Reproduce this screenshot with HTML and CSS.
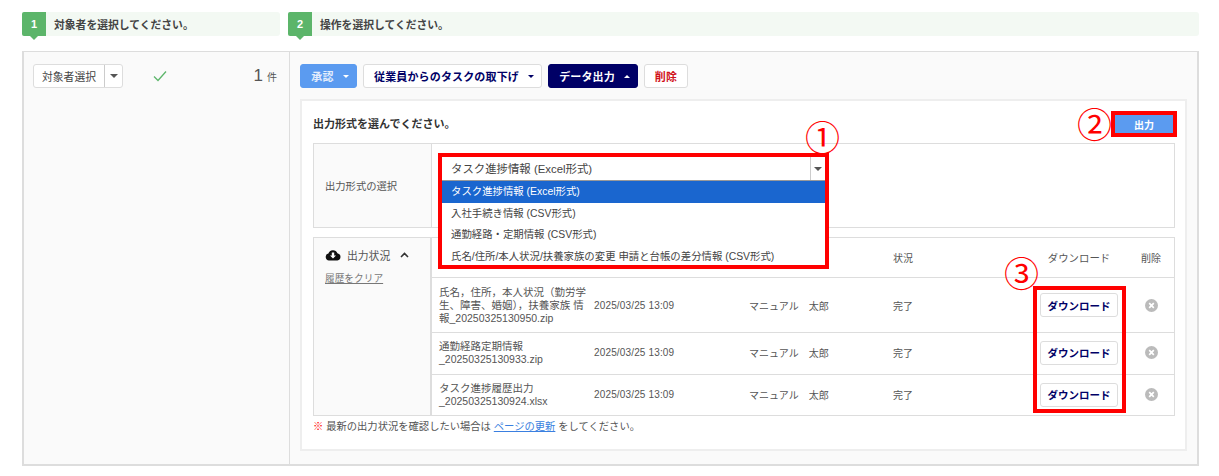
FILE: index.html
```html
<!DOCTYPE html>
<html lang="ja">
<head>
<meta charset="utf-8">
<title>データ出力</title>
<link rel="stylesheet" href="styles.css">
</head>
<body>
<div class="page">
  <div class="steps">
    <div class="step step-left"><span class="step-no">1</span><span class="step-text">対象者を選択してください。</span></div>
    <div class="step step-right"><span class="step-no">2</span><span class="step-text">操作を選択してください。</span></div>
  </div>
  <div class="panel">
    <aside class="side">
      <div class="split">
        <span class="split-label">対象者選択</span>
        <span class="split-arrow"><i class="caret caret-dark"></i></span>
      </div>
      <svg class="check" width="14" height="12" viewBox="0 0 14 12"><path d="M1 6.5 L5 10.5 L13 1.5" fill="none" stroke="#5cb56a" stroke-width="1.3"/></svg>
      <div class="count"><span class="count-num">1</span><span class="count-unit">件</span></div>
    </aside>
    <main class="work">
      <div class="actions">
        <button class="btn btn-blue">承認<i class="caret caret-white"></i></button>
        <button class="btn btn-white">従業員からのタスクの取下げ<i class="caret caret-navy"></i></button>
        <button class="btn btn-navy">データ出力<i class="caret caret-white caret-up"></i></button>
        <button class="btn btn-danger">削除</button>
      </div>
      <section class="card">
        <div class="card-head">
          <h2 class="card-title">出力形式を選んでください。</h2>
          <span class="mark mark-two">②</span>
          <button class="export">出力</button>
        </div>
        <div class="format">
          <div class="format-label">出力形式の選択</div>
          <div class="format-value">
            <span class="mark mark-one">①</span>
            <div class="combo">
              <div class="combo-head">
                <span class="combo-current">タスク進捗情報 (Excel形式)</span>
                <span class="combo-arrow"><i class="caret caret-dark"></i></span>
              </div>
              <ul class="combo-list">
                <li class="combo-item combo-active">タスク進捗情報 (Excel形式)</li>
                <li class="combo-item">入社手続き情報 (CSV形式)</li>
                <li class="combo-item">通勤経路・定期情報 (CSV形式)</li>
                <li class="combo-item">氏名/住所/本人状況/扶養家族の変更 申請と台帳の差分情報 (CSV形式)</li>
              </ul>
            </div>
          </div>
        </div>
        <div class="status">
          <div class="status-side">
            <div class="status-title">
              <svg class="cloud" width="16" height="12" viewBox="0 0 16 12"><path d="M4 11.5 A3.5 3.5 0 0 1 3.4 4.6 A4.8 4.8 0 0 1 12.4 4.2 A3.7 3.7 0 0 1 12.4 11.5 Z" fill="#111"/><path d="M6.8 3.5 H9.2 V6.4 H11 L8 9.6 L5 6.4 H6.8 Z" fill="#fff"/></svg>
              <span>出力状況</span>
              <svg class="chev" width="9" height="6" viewBox="0 0 9 6"><path d="M1 5 L4.5 1.5 L8 5" fill="none" stroke="#333" stroke-width="1.6"/></svg>
            </div>
            <a class="clear-link">履歴をクリア</a>
          </div>
          <div class="status-main">
            <div class="row row-head">
              <span></span><span></span><span></span>
              <span>状況</span>
              <span class="center">ダウンロード</span>
              <span class="center">削除</span>
            </div>
            <div class="row row-a">
              <span class="file">氏名，住所，本人状況（勤労学生、障害、婚姻），扶養家族 情報_20250325130950.zip</span>
              <span class="date">2025/03/25 13:09</span>
              <span>マニュアル　太郎</span>
              <span>完了</span>
              <span class="center"><button class="dl">ダウンロード</button></span>
              <span class="center"><svg class="del" width="13" height="13" viewBox="0 0 13 13"><circle cx="6.5" cy="6.5" r="6.5" fill="#bbb"/><path d="M4.2 4.2 L8.8 8.8 M8.8 4.2 L4.2 8.8" stroke="#fff" stroke-width="1.7"/></svg></span>
            </div>
            <div class="row row-b">
              <span class="file">通勤経路定期情報<br>_20250325130933.zip</span>
              <span class="date">2025/03/25 13:09</span>
              <span>マニュアル　太郎</span>
              <span>完了</span>
              <span class="center"><button class="dl">ダウンロード</button></span>
              <span class="center"><svg class="del" width="13" height="13" viewBox="0 0 13 13"><circle cx="6.5" cy="6.5" r="6.5" fill="#bbb"/><path d="M4.2 4.2 L8.8 8.8 M8.8 4.2 L4.2 8.8" stroke="#fff" stroke-width="1.7"/></svg></span>
            </div>
            <div class="row row-b row-last">
              <span class="file">タスク進捗履歴出力<br>_20250325130924.xlsx</span>
              <span class="date">2025/03/25 13:09</span>
              <span>マニュアル　太郎</span>
              <span>完了</span>
              <span class="center"><button class="dl">ダウンロード</button></span>
              <span class="center"><svg class="del" width="13" height="13" viewBox="0 0 13 13"><circle cx="6.5" cy="6.5" r="6.5" fill="#bbb"/><path d="M4.2 4.2 L8.8 8.8 M8.8 4.2 L4.2 8.8" stroke="#fff" stroke-width="1.7"/></svg></span>
            </div>
            <span class="mark mark-three">③</span>
            <div class="dl-frame"></div>
          </div>
        </div>
        <p class="note"><span class="note-mark">※</span> 最新の出力状況を確認したい場合は <a class="note-link">ページの更新</a> をしてください。</p>
      </section>
    </main>
  </div>
</div>
</body>
</html>
```

FILE: styles.css
```css
* { box-sizing: border-box; }
html, body { margin: 0; padding: 0; background: #fff; }
body {
  font-family: "Liberation Sans", "Noto Sans CJK JP", sans-serif;
  font-size: 10px;
  color: #555;
  width: 1219px;
  height: 476px;
  overflow: hidden;
}
.page { padding: 12px 20px 0 22px; }

.steps { display: flex; gap: 8px; height: 39px; }
.step { position: relative; display: flex; height: 24px; background: #f3f9f3; border-radius: 3px; align-items: center; }
.step-left { width: 258px; }
.step-right { flex: 1; }
.step-no {
  position: relative;
  width: 24px; height: 24px;
  background: #5cb56a; color: #fff;
  font-weight: bold; font-size: 11px;
  display: flex; align-items: center; justify-content: center;
  border-radius: 2px 0 0 2px;
}
.step-no::after {
  content: "";
  position: absolute; left: 8px; top: 24px;
  border: 4px solid transparent; border-top-color: #5cb56a; border-bottom: 0;
}
.step-text { margin-left: 8px; font-size: 10.8px; font-weight: bold; color: #444; }

.panel {
  display: flex;
  height: 415px;
  background: #fafafa;
  border: 2px solid #ddd;
  border-width: 1px 2px 2px;
}
.side {
  width: 266px; flex: none;
  border-right: 1px solid #ddd;
  display: flex; align-items: flex-start;
  padding: 12px 12px 0 9px;
}
.split { display: flex; width: 90px; height: 24px; background: #fff; border: 1px solid #ddd; border-radius: 3px; }
.split-label { flex: 1; display: flex; align-items: center; justify-content: center; font-size: 10.8px; color: #444; }
.split-arrow { width: 18px; border-left: 1px solid #ccc; display: flex; align-items: center; justify-content: center; }
.check { margin: 6px 0 0 30px; }
.count { margin-left: auto; display: flex; align-items: baseline; color: #555; }
.count-num { font-size: 17px; line-height: 24px; }
.count-unit { font-size: 10px; margin-left: 4px; }

.caret { display: inline-block; border-style: solid; border-color: currentColor transparent transparent; border-width: 3.5px 3.5px 0; }
.caret-up { border-color: transparent transparent currentColor; border-width: 0 3.5px 3.5px; }
.caret-dark { color: #555; border-width: 4px 4px 0; }
.caret-white { color: #fff; }
.caret-navy { color: #006; }

.work { flex: 1; padding: 12px 10px 0; }
.actions { display: flex; gap: 6px; height: 24px; }
.btn {
  height: 24px; padding: 0 0 0 3px; border-radius: 3px;
  font: bold 11px "Liberation Sans", "Noto Sans CJK JP", sans-serif;
  letter-spacing: .15px;
  display: flex; align-items: center; justify-content: center; gap: 9px;
  border: 1px solid #ddd; background: #fff;
}
.btn-blue { width: 57px; background: #5b9bf0; border-color: #5b9bf0; color: #e4eefc; }
.btn-white { width: 179px; color: #006; }
.btn-navy { width: 90px; background: #006; border-color: #006; color: #fff; }
.btn-danger { width: 44px; padding: 0; color: #d0101a; }

.card {
  margin-top: 11px; height: 352px;
  background: #fff; border: 2px solid #eee;
  padding: 0 10px 0 11px;
}
.card-head { position: relative; display: flex; align-items: flex-start; justify-content: space-between; height: 42px; padding-top: 10px; }
.card-title { margin: 6px 0 0; font-size: 11px; line-height: 14px; font-weight: bold; color: #333; }
.export {
  width: 66px; height: 26px; margin-right: -2px;
  background: #5b9bf0; color: #fff; border: 4px solid #f00; padding: 0;
  font: bold 10px "Liberation Sans", "Noto Sans CJK JP", sans-serif;
}
.mark { position: absolute; color: #f00; font-size: 35px; line-height: 36px; z-index: 3; font-family: "Noto Sans CJK JP", sans-serif; }
.mark-two { right: 63px; top: 4px; }

.format { display: flex; height: 85px; border: 1px solid #ddd; }
.format-label { width: 118px; flex: none; border-right: 1px solid #ddd; background: #fafafa; display: flex; align-items: center; padding-left: 11px; font-size: 10.3px; }
.format-value { flex: 1; position: relative; }
.mark-one { left: 373px; top: -26px; }
.combo {
  position: absolute; left: 6px; top: 9px; z-index: 2;
  width: 391px; height: 116px;
  border: 4px solid #f00; background: #fff;
  display: flex; flex-direction: column;
}
.combo-head { display: flex; height: 24px; border-bottom: 1px solid #999; flex: none; }
.combo-current { flex: 1; display: flex; align-items: center; padding: 0 0 2px 9px; font-size: 11.4px; color: #444; }
.combo-arrow { width: 15px; border-left: 1px solid #ccc; display: flex; align-items: center; justify-content: center; }
.combo-list { list-style: none; margin: 0; padding: 0; }
.combo-item { height: 21.5px; display: flex; align-items: center; padding: 0 0 2px 9px; font-size: 10.4px; color: #444; }
.combo-active { background: #1a66cf; color: #fff; }

.status { display: flex; margin-top: 9px; height: 179px; border: 1px solid #ddd; }
.status-side { width: 118px; flex: none; border-right: 2px solid #ddd; background: #fafafa; padding: 10px 0 0 11px; }
.status-title { display: flex; align-items: center; font-size: 10.8px; height: 14px; }
.cloud { margin-right: 6px; }
.chev { margin-left: 10px; }
.clear-link { display: block; margin-top: 9px; font-size: 9.7px; text-decoration: underline; color: #777; }
.status-main { position: relative; flex: 1; }
.row {
  display: grid;
  grid-template-columns: 162px 155px 144px 140px 98px 1fr;
  align-items: center;
  border-bottom: 1px solid #ddd;
  font-size: 10px;
}
.row > span:first-child { padding-left: 7px; }
.row-head { height: 40px; }
.row-a { height: 55px; }
.row-b { height: 42px; padding-bottom: 2px; }
.row-last { height: 41px; border-bottom: 0; }
.file { line-height: 13px; padding-right: 8px; font-size: 10.5px; }
.date { letter-spacing: .15px; }
.center { display: flex; justify-content: center; }
.center:nth-child(5) { padding-right: 6px; }
.center:nth-child(6) { padding-right: 3px; }
.row-head .center:nth-child(5) { font-size: 10.4px; }
.dl {
  width: 78px; height: 24px; padding: 0;
  background: #fff; border: 1px solid #ddd; border-radius: 3px;
  color: #006; font: bold 10.5px "Liberation Sans", "Noto Sans CJK JP", sans-serif;
}
.mark-three { left: 572px; top: 16px; }
.dl-frame { position: absolute; left: 601px; top: 48px; width: 93px; height: 127px; border: 4px solid #f00; pointer-events: none; }

.note { margin: 2px 0 0; font-size: 10.3px; color: #555; }
.note-mark { color: #f00; }
.note-link { color: #3a7fe0; text-decoration: underline; }
```
